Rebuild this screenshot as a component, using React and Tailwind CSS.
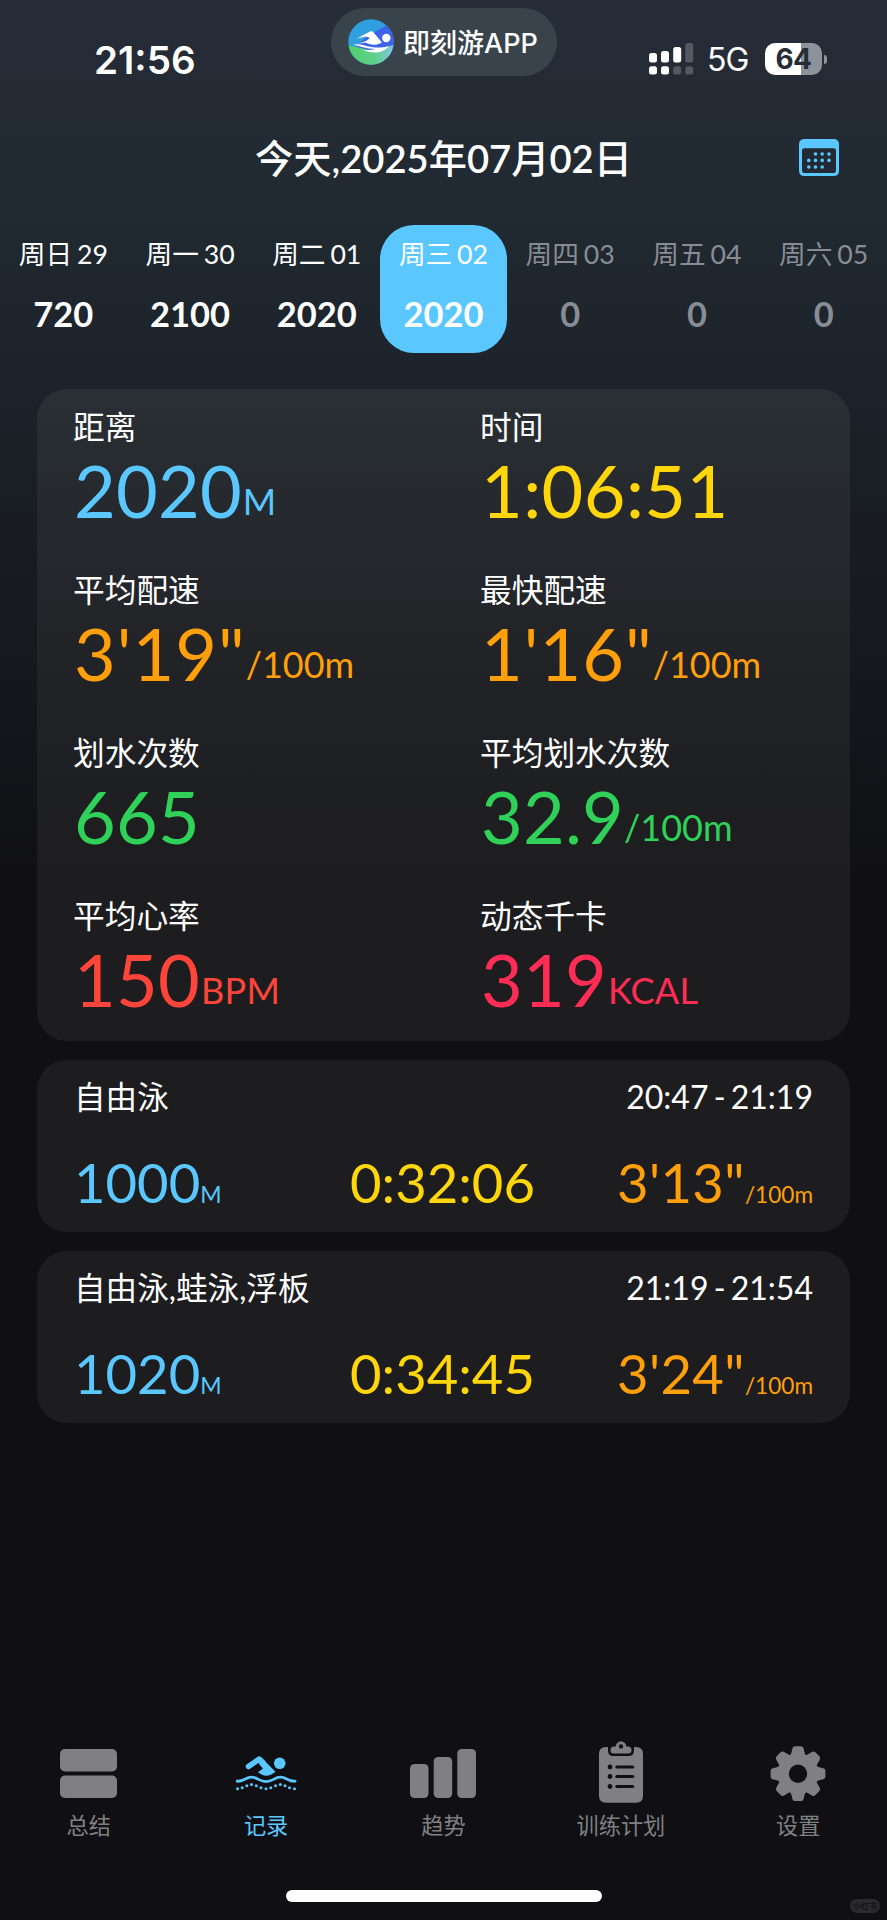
import { useState } from "react";

const DAYS = [
  { label: "周日 29", meters: 720 },
  { label: "周一 30", meters: 2100 },
  { label: "周二 01", meters: 2020 },
  { label: "周三 02", meters: 2020 },
  { label: "周四 03", meters: 0, future: true },
  { label: "周五 04", meters: 0, future: true },
  { label: "周六 05", meters: 0, future: true },
];

const STATS = [
  { label: "距离", value: "2020", unit: "M", color: "text-[#5ac8ff]" },
  { label: "时间", value: "1:06:51", unit: "", color: "text-[#ffd60a]" },
  { label: "平均配速", value: "3'19\"", unit: "/100m", color: "text-[#ff9f0a]" },
  { label: "最快配速", value: "1'16\"", unit: "/100m", color: "text-[#ff9f0a]" },
  { label: "划水次数", value: "665", unit: "", color: "text-[#30d158]" },
  { label: "平均划水次数", value: "32.9", unit: "/100m", color: "text-[#30d158]" },
  { label: "平均心率", value: "150", unit: "BPM", color: "text-[#ff453a]" },
  { label: "动态千卡", value: "319", unit: "KCAL", color: "text-[#ff2d55]" },
];

const SESSIONS = [
  { style: "自由泳", range: "20:47 - 21:19", meters: "1000", time: "0:32:06", pace: "3'13\"" },
  { style: "自由泳,蛙泳,浮板", range: "21:19 - 21:54", meters: "1020", time: "0:34:45", pace: "3'24\"" },
];

function AppLogo() {
  return (
    <svg className="w-[46px] h-[46px]" viewBox="0 0 46 46">
      <defs>
        <clipPath id="logo">
          <circle cx="23" cy="23" r="22.7" />
        </clipPath>
        <linearGradient id="sea" x1="0" y1="0" x2="1" y2="0">
          <stop offset="0" stopColor="#4fd06a" />
          <stop offset="0.6" stopColor="#5fd08c" />
          <stop offset="1" stopColor="#86c3ea" />
        </linearGradient>
      </defs>
      <g clipPath="url(#logo)">
        <rect width="46" height="46" fill="#2f9fe0" />
        <path d="M46 2L20 17L4 30L46 34Z" fill="#3c63ea" />
        <path d="M0 27C10 26 20 33 30 31C36 30 40 27 46 26V46H0Z" fill="url(#sea)" />
        <path d="M5 26C14 22.5 22 32 41 27C34 36 22 34 15 31C20 31.5 24 31 27 30C18 30 11 26.5 5 26Z" fill="#fff" />
        <path d="M9 19.5L22 12.5C24 12 25 12.5 26 14L34 23.5C27 27.5 22 25.5 17 23.5L9 25L18 22L22 19L18 17.5Z" fill="#fff" />
        <circle cx="38.3" cy="19" r="4.2" fill="#fff" />
      </g>
    </svg>
  );
}

function SignalIcon() {
  return (
    <svg className="w-[45px] h-8" viewBox="0 0 45 32" fill="#fff">
      <rect x="0" y="10" width="8" height="9.5" rx="2.5" />
      <rect x="12" y="8" width="8" height="11.5" rx="2.5" />
      <rect x="24.2" y="4" width="8" height="15.5" rx="2.5" />
      <rect x="36.3" y="0" width="8" height="19.5" rx="2.5" opacity="0.22" />
      <rect x="0" y="23.3" width="8" height="8.2" rx="2.5" />
      <rect x="12" y="23.3" width="8" height="8.2" rx="2.5" />
      <rect x="24.2" y="23.3" width="8" height="8.2" rx="2.5" opacity="0.22" />
      <rect x="36.3" y="23.3" width="8" height="8.2" rx="2.5" opacity="0.22" />
    </svg>
  );
}

function CalendarIcon() {
  const dots = [
    [16.5, 15], [23.2, 15], [30, 15],
    [9.8, 21.4], [16.5, 21.4], [23.2, 21.4], [30, 21.4],
    [9.8, 28], [16.5, 28], [23.2, 28],
  ];
  return (
    <svg className="w-10 h-[37px]" viewBox="0 0 40 37" fill="#5ac8ff">
      <path
        fillRule="evenodd"
        d="M5.5 0H34.5Q40 0 40 5.5V31.5Q40 37 34.5 37H5.5Q0 37 0 31.5V5.5Q0 0 5.5 0ZM5.5 9.3Q3 9.3 3 11.8V31.2Q3 34 5.8 34H34.2Q37 34 37 31.2V11.8Q37 9.3 34.5 9.3Z"
      />
      {dots.map(([x, y]) => (
        <circle key={`${x}-${y}`} cx={x} cy={y} r="1.8" />
      ))}
    </svg>
  );
}

function SummaryIcon() {
  return (
    <svg className="w-[57px] h-[62px]" viewBox="0 0 57 62" fill="currentColor">
      <rect x="0" y="8" width="57" height="22.5" rx="5" />
      <rect x="0" y="34.5" width="57" height="22.5" rx="5" />
    </svg>
  );
}

function SwimIcon() {
  // dotted second wave under the solid one
  const dots = [
    [2, 28.7], [6.7, 27.7], [11.3, 25.7], [16, 24.5], [20.8, 25.7], [25.5, 27.7], [30.5, 28.7],
    [35.3, 27.7], [40, 25.7], [44.8, 24.5], [49.5, 25.7], [54, 27.7], [59, 28.7],
  ];
  return (
    <svg className="w-[61px] h-[62px]" viewBox="0 0 61 62" fill="currentColor">
      <g transform="translate(-0.5 17.5)">
        <circle cx="44.2" cy="4.8" r="5.8" />
        <path
          d="M13 8L23.5 0.7L27.5 4.3"
          fill="none"
          stroke="currentColor"
          strokeWidth="5.6"
          strokeLinecap="round"
          strokeLinejoin="round"
        />
        <path d="M25.6 -1.3L40 13.2C36 16.2 33.5 17.4 30 17.2C27 17 25 15.5 22.5 13.7L27.5 10L23.5 5.5Z" />
        <path
          d="M1.5 22.7C8 23.2 10 18.7 16 18.7C22 18.7 24 23.2 30.5 23.2C37 23.2 39 18.7 45 18.7C51 18.7 53 23.2 59.5 22.7"
          fill="none"
          stroke="currentColor"
          strokeWidth="2.8"
          strokeLinecap="round"
        />
        {dots.map(([x, y]) => (
          <circle key={x} cx={x} cy={y + 1.5} r="1.5" />
        ))}
      </g>
    </svg>
  );
}

function TrendIcon() {
  return (
    <svg className="w-[66px] h-[62px]" viewBox="0 0 66 62" fill="currentColor">
      <rect x="0" y="23" width="18.5" height="34" rx="4.5" />
      <rect x="23.7" y="16" width="18.5" height="41" rx="4.5" />
      <rect x="47.3" y="8" width="18.7" height="49" rx="4.5" />
    </svg>
  );
}

function PlanIcon() {
  return (
    <svg className="w-[44px] h-[62px]" viewBox="0 0 44 62" fill="currentColor">
      <path d="M7 6H9V9.5Q9 15 14.5 15H29.5Q35 15 35 9.5V6H37Q44 6 44 13V54.5Q44 61.8 37 61.8H7Q0 61.8 0 54.5V13Q0 6 7 6Z" />
      <path
        fillRule="evenodd"
        d="M15 5.5H16.6C17.3 2.3 19 0.2 22 0.2S26.7 2.3 27.4 5.5H29Q32.5 5.5 32.5 9V9.3Q32.5 12.5 29.3 12.5H14.7Q11.5 12.5 11.5 9.3V9Q11.5 5.5 15 5.5ZM22 3.2A2.2 2.2 0 1 0 22 7.6A2.2 2.2 0 1 0 22 3.2Z"
      />
      {[26, 35.5, 45.5].map((y) => (
        <g key={y} fill="#101014">
          <circle cx="11" cy={y} r="2.4" />
          <rect x="16.3" y={y - 1.6} width="19" height="3.2" rx="1.6" />
        </g>
      ))}
    </svg>
  );
}

function GearIcon() {
  return (
    <svg className="w-[56px] h-[62px]" viewBox="-28 -32.7 56 62" fill="currentColor">
      {[0, 45, 90, 135, 180, 225, 270, 315].map((a) => (
        <path
          key={a}
          transform={`rotate(${a})`}
          d="M-9.5 -17C-7 -18.5 -6.5 -21 -5.8 -24.5Q-5.2 -27.4 -2.8 -27.4H2.8Q5.2 -27.4 5.8 -24.5C6.5 -21 7 -18.5 9.5 -17Z"
        />
      ))}
      <circle r="14.2" fill="none" stroke="currentColor" strokeWidth="10" />
    </svg>
  );
}

const TABS = [
  { name: "总结", Icon: SummaryIcon },
  { name: "记录", Icon: SwimIcon },
  { name: "趋势", Icon: TrendIcon },
  { name: "训练计划", Icon: PlanIcon },
  { name: "设置", Icon: GearIcon },
];

function StatusBar() {
  return (
    <div className="h-[118px] flex items-start justify-between">
      <div className="w-[331px] pl-[94px] pt-[37px] font-['Inter','Noto_Sans_CJK_SC',sans-serif] text-[38.6px] leading-[46px] font-semibold">
        21:56
      </div>
      <div className="mt-[8px] w-[226px] h-[68px] rounded-full bg-[#39434b] flex items-center pl-[17px] pr-2 gap-[9px]">
        <AppLogo />
        <span className="pt-[3px] font-['Inter','Noto_Sans_CJK_SC',sans-serif] text-[27px] leading-8 font-medium whitespace-nowrap">
          即刻游APP
        </span>
      </div>
      <div className="w-[330px] pt-[43px] pl-[92px] flex items-center font-['Inter',sans-serif]">
        <SignalIcon />
        <span className="ml-[13px] w-[44px] pt-[2px] text-[32px] leading-[30px] font-normal tracking-[-1px]">5G</span>
        <div className="ml-[14px] w-[57px] h-8 rounded-[10px] bg-linear-to-r from-white from-64% to-[#8e939b] to-64% flex items-center justify-center text-[28px] leading-8 font-bold tracking-[-0.5px] text-[#262c37]">
          64
        </div>
        <div className="ml-[2px] w-[3px] h-[9px] rounded-r-full bg-[#8e939b]" />
      </div>
    </div>
  );
}

// quotes and colons sit a little looser than plain digits
function valueClass(value) {
  if (value.includes("'")) return "text-[72px] tracking-[1px]";
  if (value.includes(":")) return "text-[72px] tracking-[0.4px]";
  return "text-[72px] tracking-[0.2px]";
}

function Stat({ label, value, unit, color }) {
  return (
    <div className="h-[163px] pt-[15px]">
      <div className="text-[31.7px] leading-[46px]">{label}</div>
      <div className={`flex items-baseline leading-[86px] mt-[-3px] pl-px ${color}`}>
        <span className={valueClass(value)}>{value}</span>
        {unit && (
          <span
            className={`relative top-[-3px] text-[36px] leading-none ${unit === "/100m" ? "" : "ml-px tracking-[0.3px]"}`}
          >
            {unit}
          </span>
        )}
      </div>
    </div>
  );
}

function SessionCard({ style, range, meters, time, pace }) {
  return (
    <section className="h-[172px] rounded-[30px] bg-[#1d1d1f] px-[37px] pt-[14px]">
      <div className="flex items-center justify-between text-[31.6px] leading-[46px]">
        <span>{style}</span>
        <span className="text-[32px] [word-spacing:-3px]">{range}</span>
      </div>
      <div className="mt-[29px] grid grid-cols-[276px_1fr_auto] items-baseline text-[54.4px] leading-[66px]">
        <div className="text-[#5ac8ff]">
          {meters}
          <span className="text-[23px]">M</span>
        </div>
        <div className="text-[#ffd60a]">{time}</div>
        <div className="text-[#ff9f0a]">
          <span className="tracking-[0.4px]">{pace}</span>
          <span className="text-[22.6px]">/100m</span>
        </div>
      </div>
    </section>
  );
}

export default function App() {
  const [day, setDay] = useState(3);
  const [tab, setTab] = useState(1);

  return (
    <div className="w-[887px] h-[1920px] overflow-hidden flex flex-col relative text-white font-['Lato','Noto_Sans_CJK_SC',sans-serif] bg-linear-to-b from-[#262c38] via-[#212a32] via-10% to-[#101014] to-46%">
      <StatusBar />

      {/* Title */}
      <header className="h-[79px] grid grid-cols-[1fr_auto_1fr] items-center">
        <h1 className="col-start-2 text-[38.2px] leading-[50px] font-medium">
          今天,<span className="font-semibold">2025</span>年<span className="font-semibold">07</span>月
          <span className="font-semibold">02</span>日
        </h1>
        <button className="justify-self-end mr-[48px]">
          <CalendarIcon />
        </button>
      </header>

      {/* Week strip */}
      <div className="mt-[28px] grid grid-cols-7 h-[128px]">
        {DAYS.map((d, i) => (
          <button
            key={d.label}
            onClick={() => setDay(i)}
            className={`flex flex-col items-center rounded-[34px] pt-[10px] ${
              i === day ? "bg-[#5ac8ff]" : ""
            } ${d.future ? "text-[#888c94]" : "text-white"}`}
          >
            <span className="text-[26.7px] leading-[38px] [word-spacing:-2px]">{d.label}</span>
            <span className="mt-[20px] text-[34.5px] leading-[42px] font-bold">{d.meters}</span>
          </button>
        ))}
      </div>

      <main className="mt-[36px] px-[37px] flex flex-col gap-[19px]">
        <section className="h-[652px] rounded-[30px] grid grid-cols-[407px_1fr] px-[36px] bg-linear-to-b from-[#292f34] via-[#212226] via-45% to-[#1d1d1f] to-75%">
          {STATS.map((s) => (
            <Stat key={s.label} {...s} />
          ))}
        </section>
        {SESSIONS.map((s) => (
          <SessionCard key={s.range} {...s} />
        ))}
      </main>

      {/* Tab bar */}
      <nav className="mt-auto h-[179px] grid grid-cols-5">
        {TABS.map(({ name, Icon }, i) => (
          <button
            key={name}
            onClick={() => setTab(i)}
            className={`flex flex-col items-center ${i === tab ? "text-[#5ac8ff]" : "text-[#808083]"}`}
          >
            <Icon />
            <span className="mt-[7px] text-[22.2px] leading-8">{name}</span>
          </button>
        ))}
      </nav>
      <div className="absolute bottom-[18px] left-[286px] w-[316px] h-3 rounded-full bg-white" />
      <div className="absolute bottom-[7px] right-[7px] w-[30px] h-[14px] rounded-full bg-[#2b2b2e] text-[8px] leading-[14px] text-center font-bold text-[#131316]">
        小红书
      </div>
    </div>
  );
}
